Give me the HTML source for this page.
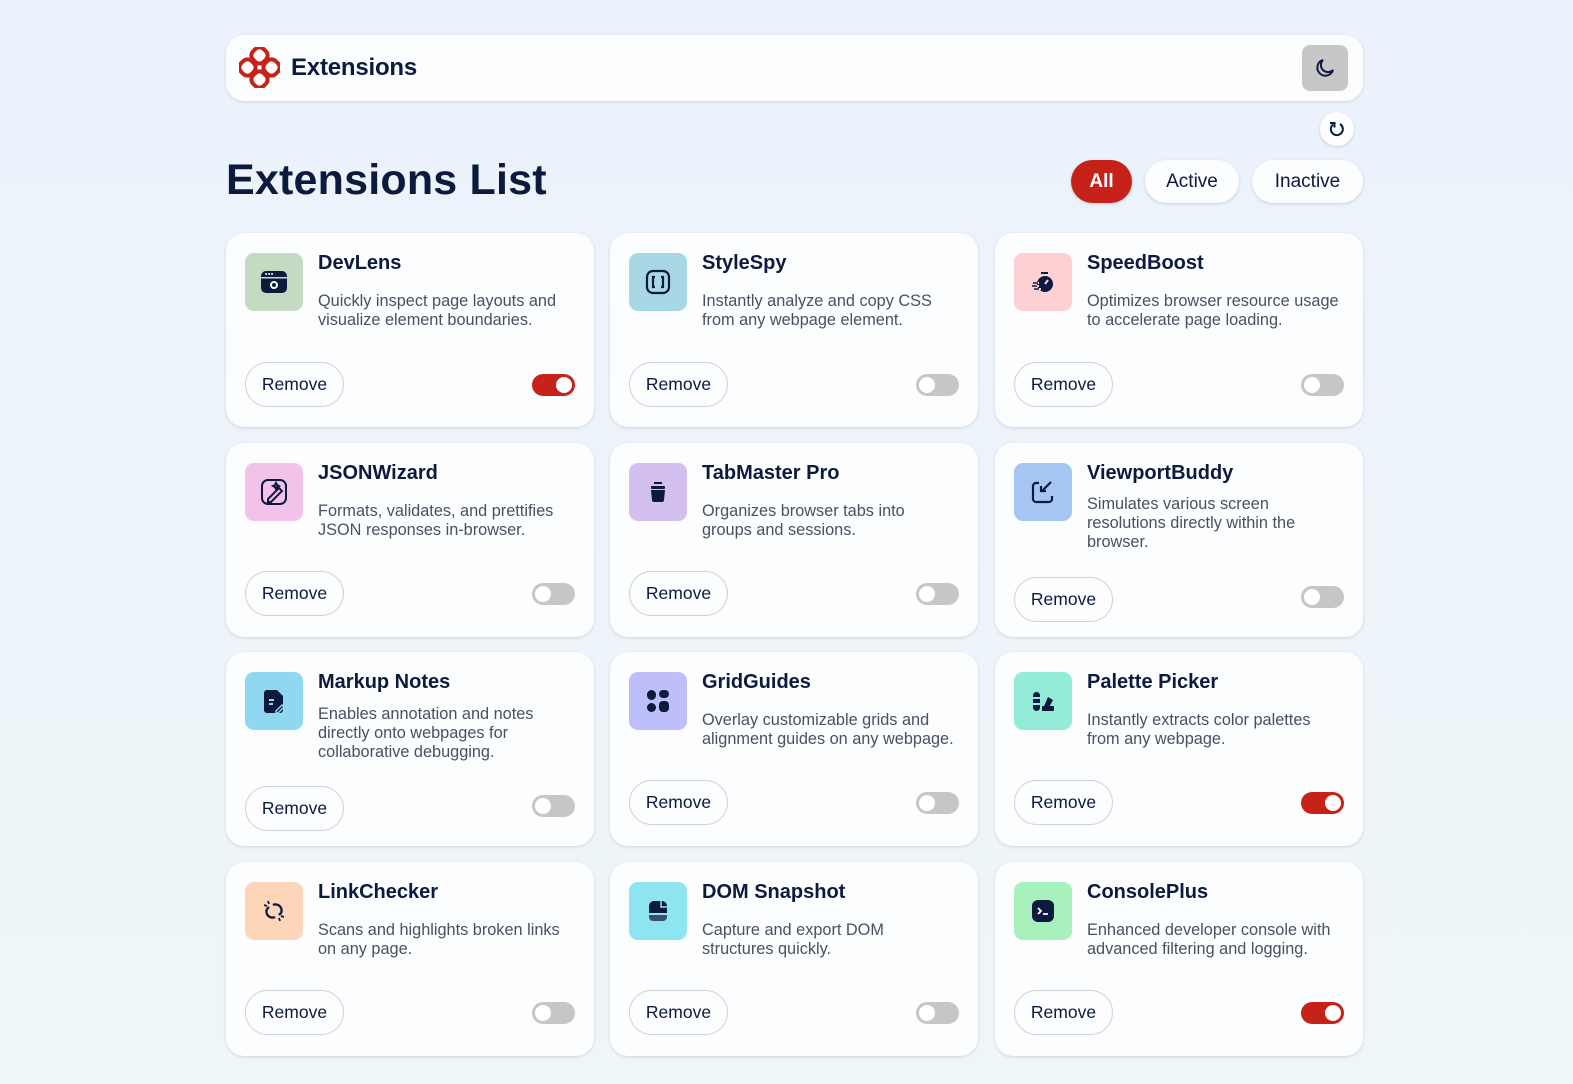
<!DOCTYPE html>
<html><head><meta charset="utf-8"><style>
*{box-sizing:border-box;margin:0;padding:0}
body{width:1573px;height:1084px;background:linear-gradient(180deg,#ebf2fc,#eef6f8);font-family:"Liberation Sans",sans-serif;color:#0c1a3e;position:relative;overflow:hidden}
.hdr{position:absolute;left:226px;top:35px;width:1137px;height:66px;background:#fbfdfe;border-radius:18px;box-shadow:0 1px 3px rgba(0,0,0,.12)}
.hdr .name{position:absolute;left:65px;top:19px;font-size:24px;font-weight:bold;letter-spacing:-.2px}
.moon{position:absolute;right:15px;top:10px;width:46px;height:46px;background:#c7c7c7;border-radius:8px;display:flex;align-items:center;justify-content:center}
.ref{position:absolute;left:1320px;top:112px;width:34px;height:34px;border-radius:50%;background:#fdfdfe;box-shadow:0 1px 3px rgba(0,0,0,.15);display:flex;align-items:center;justify-content:center}
h1{position:absolute;left:226px;top:156px;font-size:43px;font-weight:bold;letter-spacing:.2px}
.pill{position:absolute;top:160px;height:43px;border-radius:22px;background:#fcfdfe;box-shadow:0 1px 3px rgba(0,0,0,.15);font-size:19px;display:flex;align-items:center;justify-content:center;color:#0c1a3e}
.pill.on{background:#c7221a;color:#fff;font-weight:bold}
.card{position:absolute;width:368px;height:194px;background:#fbfdfe;border-radius:18px;box-shadow:0 1px 3px rgba(0,0,0,.13)}
.ic{position:absolute;left:19px;top:20px;width:58px;height:58px;border-radius:9px;display:flex;align-items:center;justify-content:center}
.t{position:absolute;left:92px;top:19px;font-size:20px;font-weight:bold}
.d{position:absolute;left:92px;width:253px;font-size:16.3px;line-height:19px;color:#4a5060}
.rm{position:absolute;left:19px;width:99px;height:45px;border:1.5px solid #cfd2d6;border-radius:23px;font-size:17.5px;display:flex;align-items:center;justify-content:center;color:#0c1a3e}
.tg{position:absolute;left:306px;width:43px;height:22px;border-radius:11px;background:#c6c6c6}
.tg::after{content:"";position:absolute;top:3px;left:3px;width:16px;height:16px;border-radius:50%;background:#fff}
.tg.on{background:#c7221a}.tg.on::after{left:24px}
</style></head><body>
<div class="hdr">
<svg style="position:absolute;left:13px;top:12px" width="41" height="41" viewBox="0 0 41 41" fill="none" stroke="#c7221a" stroke-width="4"><g transform="rotate(45 20.5 20.5)"><rect x="4.5" y="4.5" width="15" height="15" rx="6"/><rect x="21.5" y="4.5" width="15" height="15" rx="6"/><rect x="4.5" y="21.5" width="15" height="15" rx="6"/><rect x="21.5" y="21.5" width="15" height="15" rx="6"/></g></svg>
<div class="name">Extensions</div>
<div class="moon"><svg width="22" height="22" viewBox="0 0 22 22"><path d="M9 3a8 8 0 1 0 10 10A7 7 0 0 1 9 3z" fill="none" stroke="#0c1a3e" stroke-width="2"/></svg></div>
</div>
<div class="ref"><svg width="18" height="18" viewBox="0 0 18 18"><path d="M5 4.5A6 6 0 1 0 12 4" fill="none" stroke="#0c1a3e" stroke-width="2"/><path d="M2 3h4.5v4.5" fill="none" stroke="#0c1a3e" stroke-width="2"/></svg></div>
<h1>Extensions List</h1>
<div class="pill on" style="left:1071px;width:61px">All</div>
<div class="pill" style="left:1145px;width:94px">Active</div>
<div class="pill" style="left:1252px;width:111px">Inactive</div>

<div class="card" style="left:226px;top:233px"><div class="ic" style="background:#c2dbc2"><svg width="28" height="28"><rect x="1" y="3" width="26" height="22" rx="5" fill="#0c1a3e"/><rect x="1" y="9" width="26" height="1.5" fill="#c2dbc2"/><circle cx="6" cy="6" r="1" fill="#fff"/><circle cx="9" cy="6" r="1" fill="#fff"/><circle cx="12" cy="6" r="1" fill="#fff"/><circle cx="14" cy="17" r="3" fill="none" stroke="#fff" stroke-width="2"/></svg></div><div class="t">DevLens</div><div class="d" style="top:59px">Quickly inspect page layouts and visualize element boundaries.</div><div class="rm" style="top:129px">Remove</div><div class="tg on" style="top:141px"></div></div>

<div class="card" style="left:610px;top:233px"><div class="ic" style="background:#a8d8e6"><svg width="28" height="28" fill="none" stroke="#0c1a3e" stroke-width="2.2"><rect x="3" y="3" width="22" height="22" rx="6"/><path d="M11 9h-2v10h2M17 9h2v10h-2"/></svg></div><div class="t">StyleSpy</div><div class="d" style="top:59px">Instantly analyze and copy CSS from any webpage element.</div><div class="rm" style="top:129px">Remove</div><div class="tg" style="top:141px"></div></div>

<div class="card" style="left:995px;top:233px"><div class="ic" style="background:#fdd0d4"><svg width="28" height="28"><circle cx="16" cy="16" r="8" fill="#0c1a3e"/><rect x="12" y="4" width="7" height="2" fill="#0c1a3e"/><path d="M4 15h6M3 18h7M5 21h7" stroke="#fdd0d4" stroke-width="2"/><path d="M4 15h5M3 18h5M5 21h5" stroke="#0c1a3e" stroke-width="1.5"/><path d="M16 16l3-4" stroke="#fdd0d4" stroke-width="2"/></svg></div><div class="t">SpeedBoost</div><div class="d" style="top:59px">Optimizes browser resource usage to accelerate page loading.</div><div class="rm" style="top:129px">Remove</div><div class="tg" style="top:141px"></div></div>

<div class="card" style="left:226px;top:443px"><div class="ic" style="background:#f3c2e8"><svg width="28" height="28" fill="none" stroke="#0c1a3e" stroke-width="2"><rect x="2" y="2" width="24" height="24" rx="6"/><path d="M8 21l11-11 3 3-11 11H8z M16 5l1 2 2 1-2 1-1 2-1-2-2-1 2-1z"/></svg></div><div class="t">JSONWizard</div><div class="d" style="top:59px">Formats, validates, and prettifies JSON responses in-browser.</div><div class="rm" style="top:128px">Remove</div><div class="tg" style="top:140px"></div></div>

<div class="card" style="left:610px;top:443px"><div class="ic" style="background:#d4c0f0"><svg width="28" height="28" fill="#0c1a3e"><rect x="10" y="4" width="8" height="2"/><rect x="7" y="8" width="14" height="3" rx="1"/><path d="M7 12h14l-1 10a2 2 0 0 1-2 2h-8a2 2 0 0 1-2-2z"/></svg></div><div class="t">TabMaster Pro</div><div class="d" style="top:59px">Organizes browser tabs into groups and sessions.</div><div class="rm" style="top:128px">Remove</div><div class="tg" style="top:140px"></div></div>

<div class="card" style="left:995px;top:443px"><div class="ic" style="background:#a6c6f2"><svg width="28" height="28" fill="none" stroke="#0c1a3e" stroke-width="2.2"><path d="M10 5H7a3 3 0 0 0-3 3v13a3 3 0 0 0 3 3h13a3 3 0 0 0 3-3v-3M22 4l-9 9M12 8v5h5"/></svg></div><div class="t">ViewportBuddy</div><div class="d" style="top:52px">Simulates various screen resolutions directly within the browser.</div><div class="rm" style="top:134px">Remove</div><div class="tg" style="top:143px"></div></div>

<div class="card" style="left:226px;top:652px"><div class="ic" style="background:#90d8f2"><svg width="28" height="28"><path d="M7 3h10l6 6v14a3 3 0 0 1-3 3H7a3 3 0 0 1-3-3V6a3 3 0 0 1 3-3z" fill="#0c1a3e"/><path d="M9 13h5M9 17h4" stroke="#90d8f2" stroke-width="2"/><path d="M16 24l6-6 2 2-6 6h-2z" fill="#0c1a3e" stroke="#90d8f2" stroke-width="1.5"/></svg></div><div class="t">Markup Notes</div><div class="d" style="top:53px">Enables annotation and notes directly onto webpages for collaborative debugging.</div><div class="rm" style="top:134px">Remove</div><div class="tg" style="top:143px"></div></div>

<div class="card" style="left:610px;top:652px"><div class="ic" style="background:#bebefa"><svg width="28" height="28" fill="#0c1a3e"><rect x="3" y="3" width="9" height="10" rx="4.5"/><rect x="15" y="3" width="10" height="8" rx="4"/><rect x="3" y="16" width="9" height="9" rx="4.5"/><rect x="15" y="14" width="10" height="11" rx="4"/></svg></div><div class="t">GridGuides</div><div class="d" style="top:59px">Overlay customizable grids and alignment guides on any webpage.</div><div class="rm" style="top:128px">Remove</div><div class="tg" style="top:140px"></div></div>

<div class="card" style="left:995px;top:652px"><div class="ic" style="background:#92ecd8"><svg width="28" height="28" fill="#0c1a3e"><rect x="4" y="5" width="7" height="19" rx="3.5"/><path d="M4 11h7M4 17h7" stroke="#92ecd8" stroke-width="2"/><path d="M13 24l6-14 5 3-6 11z"/><rect x="13" y="19" width="12" height="5" rx="1"/></svg></div><div class="t">Palette Picker</div><div class="d" style="top:59px">Instantly extracts color palettes from any webpage.</div><div class="rm" style="top:128px">Remove</div><div class="tg on" style="top:140px"></div></div>

<div class="card" style="left:226px;top:862px"><div class="ic" style="background:#fdd6ba"><svg width="28" height="28" fill="none" stroke="#0c1a3e" stroke-width="2.4"><path d="M13 8a6 6 0 0 1 8 8l-2 2M15 20a6 6 0 0 1-8-8l2-2"/><path d="M8 4l1 3M4 8l3 1M20 24l-1-3M24 20l-3-1" stroke-width="1.8"/></svg></div><div class="t">LinkChecker</div><div class="d" style="top:59px">Scans and highlights broken links on any page.</div><div class="rm" style="top:128px">Remove</div><div class="tg" style="top:140px"></div></div>

<div class="card" style="left:610px;top:862px"><div class="ic" style="background:#8ee4f0"><svg width="28" height="28"><path d="M5 16V9a5 5 0 0 1 5-5h8a5 5 0 0 1 5 5v7z" fill="#0c1a3e"/><path d="M5 18h18v2a4 4 0 0 1-4 4H9a4 4 0 0 1-4-4z" fill="#3a5068"/><path d="M17 4v6h6" fill="none" stroke="#8ee4f0" stroke-width="1.5"/></svg></div><div class="t">DOM Snapshot</div><div class="d" style="top:59px">Capture and export DOM structures quickly.</div><div class="rm" style="top:128px">Remove</div><div class="tg" style="top:140px"></div></div>

<div class="card" style="left:995px;top:862px"><div class="ic" style="background:#a8f0bc"><svg width="28" height="28"><rect x="3" y="3" width="22" height="22" rx="6" fill="#0c1a3e"/><path d="M9 11l3 3-3 3M14 17h5" stroke="#fff" stroke-width="1.8" fill="none"/></svg></div><div class="t">ConsolePlus</div><div class="d" style="top:59px">Enhanced developer console with advanced filtering and logging.</div><div class="rm" style="top:128px">Remove</div><div class="tg on" style="top:140px"></div></div>
</body></html>
